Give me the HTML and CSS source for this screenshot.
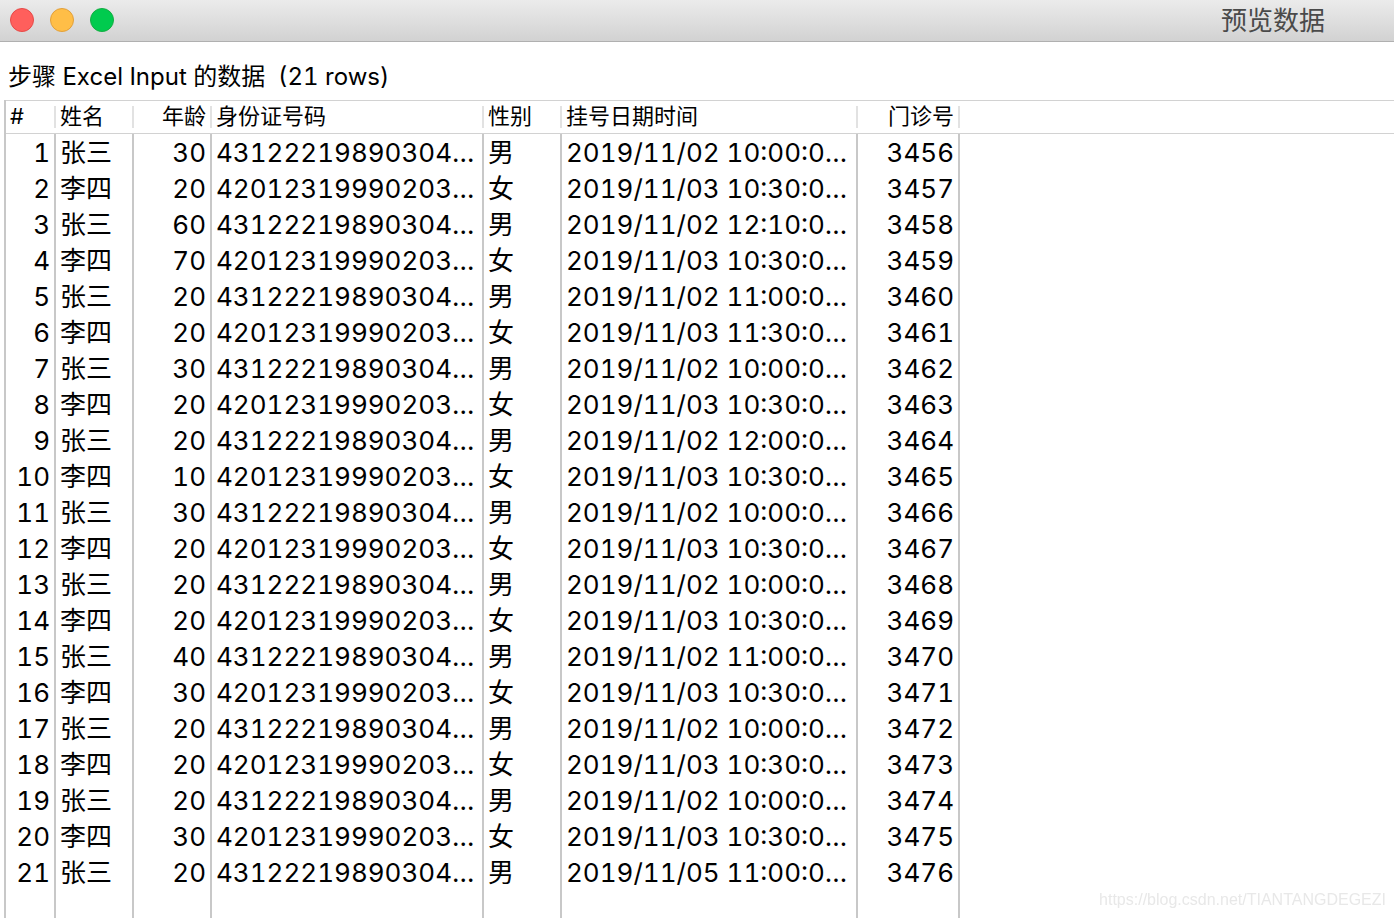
FILE: index.html
```html
<!DOCTYPE html>
<html lang="zh-CN">
<head>
<meta charset="utf-8">
<title>预览数据</title>
<link rel="stylesheet" href="styles.css">
</head>
<body>
<header class="titlebar">
  <div class="controls">
    <button class="control close" type="button" aria-label="关闭"></button>
    <button class="control minimize" type="button" aria-label="最小化"></button>
    <button class="control maximize" type="button" aria-label="最大化"></button>
  </div>
  <h1 class="title">预览数据</h1>
</header>
<main class="content">
  <p class="caption" id="caption">步骤 Excel Input 的数据&nbsp; (21 rows)</p>
  <table class="preview" aria-labelledby="caption">
    <colgroup>
      <col class="col-index"><col class="col-name"><col class="col-age"><col class="col-id"><col class="col-sex"><col class="col-date"><col class="col-visit"><col>
    </colgroup>
    <thead>
      <tr><th><span>#</span></th><th><span>姓名</span></th><th class="end"><span>年龄</span></th><th><span>身份证号码</span></th><th><span>性别</span></th><th><span>挂号日期时间</span></th><th class="end"><span>门诊号</span></th><th></th></tr>
    </thead>
    <tbody>
      <tr><td>1</td><td>张三</td><td>30</td><td>43122219890304…</td><td>男</td><td>2019/11/02 10:00:0…</td><td>3456</td><td></td></tr>
      <tr><td>2</td><td>李四</td><td>20</td><td>42012319990203…</td><td>女</td><td>2019/11/03 10:30:0…</td><td>3457</td><td></td></tr>
      <tr><td>3</td><td>张三</td><td>60</td><td>43122219890304…</td><td>男</td><td>2019/11/02 12:10:0…</td><td>3458</td><td></td></tr>
      <tr><td>4</td><td>李四</td><td>70</td><td>42012319990203…</td><td>女</td><td>2019/11/03 10:30:0…</td><td>3459</td><td></td></tr>
      <tr><td>5</td><td>张三</td><td>20</td><td>43122219890304…</td><td>男</td><td>2019/11/02 11:00:0…</td><td>3460</td><td></td></tr>
      <tr><td>6</td><td>李四</td><td>20</td><td>42012319990203…</td><td>女</td><td>2019/11/03 11:30:0…</td><td>3461</td><td></td></tr>
      <tr><td>7</td><td>张三</td><td>30</td><td>43122219890304…</td><td>男</td><td>2019/11/02 10:00:0…</td><td>3462</td><td></td></tr>
      <tr><td>8</td><td>李四</td><td>20</td><td>42012319990203…</td><td>女</td><td>2019/11/03 10:30:0…</td><td>3463</td><td></td></tr>
      <tr><td>9</td><td>张三</td><td>20</td><td>43122219890304…</td><td>男</td><td>2019/11/02 12:00:0…</td><td>3464</td><td></td></tr>
      <tr><td>10</td><td>李四</td><td>10</td><td>42012319990203…</td><td>女</td><td>2019/11/03 10:30:0…</td><td>3465</td><td></td></tr>
      <tr><td>11</td><td>张三</td><td>30</td><td>43122219890304…</td><td>男</td><td>2019/11/02 10:00:0…</td><td>3466</td><td></td></tr>
      <tr><td>12</td><td>李四</td><td>20</td><td>42012319990203…</td><td>女</td><td>2019/11/03 10:30:0…</td><td>3467</td><td></td></tr>
      <tr><td>13</td><td>张三</td><td>20</td><td>43122219890304…</td><td>男</td><td>2019/11/02 10:00:0…</td><td>3468</td><td></td></tr>
      <tr><td>14</td><td>李四</td><td>20</td><td>42012319990203…</td><td>女</td><td>2019/11/03 10:30:0…</td><td>3469</td><td></td></tr>
      <tr><td>15</td><td>张三</td><td>40</td><td>43122219890304…</td><td>男</td><td>2019/11/02 11:00:0…</td><td>3470</td><td></td></tr>
      <tr><td>16</td><td>李四</td><td>30</td><td>42012319990203…</td><td>女</td><td>2019/11/03 10:30:0…</td><td>3471</td><td></td></tr>
      <tr><td>17</td><td>张三</td><td>20</td><td>43122219890304…</td><td>男</td><td>2019/11/02 10:00:0…</td><td>3472</td><td></td></tr>
      <tr><td>18</td><td>李四</td><td>20</td><td>42012319990203…</td><td>女</td><td>2019/11/03 10:30:0…</td><td>3473</td><td></td></tr>
      <tr><td>19</td><td>张三</td><td>20</td><td>43122219890304…</td><td>男</td><td>2019/11/02 10:00:0…</td><td>3474</td><td></td></tr>
      <tr><td>20</td><td>李四</td><td>30</td><td>42012319990203…</td><td>女</td><td>2019/11/03 10:30:0…</td><td>3475</td><td></td></tr>
      <tr><td>21</td><td>张三</td><td>20</td><td>43122219890304…</td><td>男</td><td>2019/11/05 11:00:0…</td><td>3476</td><td></td></tr>
      <tr class="filler"><td></td><td></td><td></td><td></td><td></td><td></td><td></td><td></td></tr>
    </tbody>
  </table>
</main>
<div class="watermark">https://blog.csdn.net/TIANTANGDEGEZI</div>
</body>
</html>
```

FILE: styles.css
```css
* {
  box-sizing: border-box;
}

body {
  margin: 0;
  background: #fff;
  color: #000;
  font-family: Inter, "Noto Sans CJK SC", sans-serif;
  font-feature-settings: "tnum";
}

.titlebar {
  display: flex;
  align-items: center;
  justify-content: space-between;
  height: 42px;
  padding: 0 69px 1px 10px;
  background: linear-gradient(#ebebeb, #d2d2d2);
  border-bottom: 1px solid #b0b0b0;
}

.controls {
  display: flex;
  gap: 16px;
}

.control {
  width: 24px;
  height: 24px;
  padding: 0;
  border: 1px solid;
  border-radius: 50%;
}

.close {
  background: #ff5f5c;
  border-color: #e64a48;
}

.minimize {
  background: #ffbe47;
  border-color: #e2a03a;
}

.maximize {
  background: #00cb4e;
  border-color: #14ad42;
}

.title {
  margin: 0;
  padding-top: 2px;
  font-size: 26px;
  font-weight: 400;
  line-height: 38px;
  color: #4a4a4a;
}

.content {
  padding-left: 4px;
}

.caption {
  margin: 0;
  padding: 17px 4px 5px;
  font-size: 24px;
  line-height: 36px;
  white-space: pre;
}

.preview {
  width: 100%;
  height: calc(100vh - 100px);
  table-layout: fixed;
  border-spacing: 0;
  border-left: 2px solid #c8c8c8;
}

.col-index { width: 50px; }
.col-name { width: 78px; }
.col-age { width: 78px; }
.col-id { width: 272px; }
.col-sex { width: 78px; }
.col-date { width: 296px; }
.col-visit { width: 102px; }

th {
  height: 34px;
  padding: 5px 0;
  border-top: 1px solid #d2d2d2;
  border-bottom: 1px solid #d2d2d2;
  font-size: 22px;
  font-weight: 400;
  line-height: 20px;
  text-align: left;
}

th span {
  display: block;
  padding: 0 4px 2px;
  border-right: 2px solid #e2e2e2;
}

th.end {
  text-align: right;
}

td {
  height: 36px;
  padding: 2px 4px 0;
  border-right: 2px solid #c8c8c8;
  font-size: 26px;
  line-height: 34px;
  white-space: nowrap;
}

td:last-child {
  border-right: 0;
}

td:nth-child(1),
td:nth-child(3),
td:nth-child(7) {
  text-align: right;
}

.filler td {
  height: auto;
  padding: 0;
}

.watermark {
  position: fixed;
  right: 8px;
  bottom: 8px;
  font-family: "Liberation Sans", Arial, sans-serif;
  font-size: 16px;
  line-height: 20px;
  color: #e8e8e8;
}
```
